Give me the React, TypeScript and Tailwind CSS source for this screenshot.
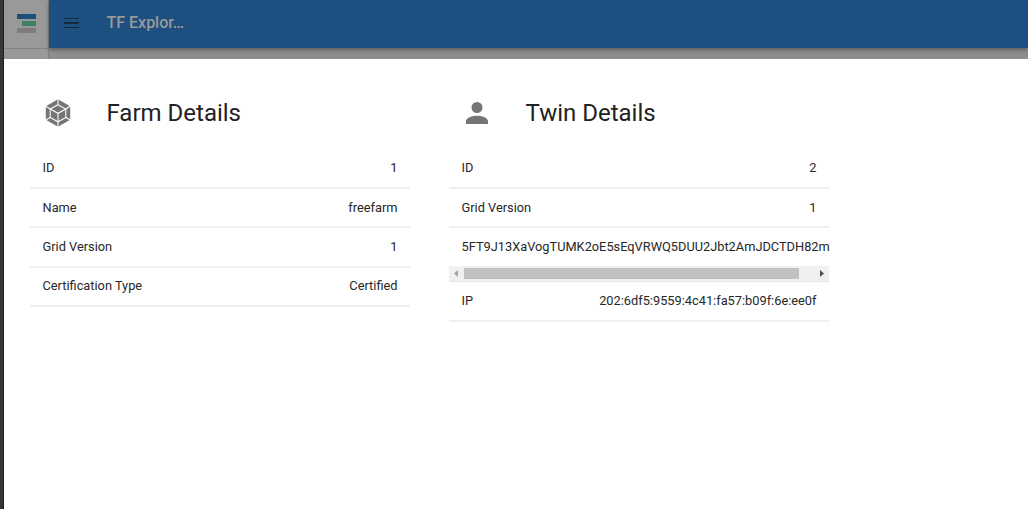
import React from "react";

type RowProps = { label: string; value: string; className?: string };

function Row({ label, value, className = "h-[39px]" }: RowProps) {
  return (
    <div
      className={`flex items-center justify-between border-b-2 border-[#efefef] px-[12.5px] text-[12.8px] leading-5 text-[#272727] ${className}`}
    >
      <span>{label}</span>
      <span>{value}</span>
    </div>
  );
}

function CubeIcon() {
  return (
    <svg width="26" height="28" viewBox="0 0 26 28" fill="#757575">
      <path d="M13 0.3 25.2 7.2V20.8L13 27.7 0.8 20.8V7.2Z" />
      <g fill="none" stroke="#fff" strokeWidth="1.05">
        <path d="M13 5.7 20.8 10V18.5L13 22.8 5.2 18.5V10Z" />
        <path d="M5.2 10 13 14.3 20.8 10M13 14.3V28M13 0V5.7M20.8 10 25.5 7M5.2 10 .5 7M5.2 18.5.5 21M20.8 18.5 25.5 21" />
      </g>
    </svg>
  );
}

function PersonIcon() {
  return (
    <svg width="22" height="22" viewBox="4 4 16 16" fill="#757575">
      <path d="M12 4a4 4 0 1 1 0 8 4 4 0 0 1 0-8zm0 10c4.42 0 8 1.79 8 4v2H4v-2c0-2.21 3.58-4 8-4z" />
    </svg>
  );
}

function Heading({ icon, title }: { icon: React.ReactNode; title: string }) {
  return (
    <div className="flex h-[53px] items-center">
      <div className="flex w-[56px] justify-center">{icon}</div>
      <h2 className="ml-[20.5px] text-[24px] leading-8 text-[#222]">{title}</h2>
    </div>
  );
}

function ScrollBar() {
  return (
    <div className="flex h-4 items-center border-b border-[#e6e6e6] bg-[#f0f0f0]">
      <div className="flex w-[15px] justify-center pr-px">
        <svg width="4" height="7" viewBox="0 0 4 7" fill="#a3a3a3">
          <path d="M4 0V7L0 3.5Z" />
        </svg>
      </div>
      <div className="h-[11px] w-[335px] bg-[#c1c1c1]" />
      <div className="ml-auto flex w-[15px] justify-center">
        <svg width="4" height="7" viewBox="0 0 4 7" fill="#505050">
          <path d="M0 0V7L4 3.5Z" />
        </svg>
      </div>
    </div>
  );
}

export default function App() {
  return (
    <div className="flex h-[509px] w-[1028px] overflow-hidden bg-white font-['Roboto',sans-serif]">
      <div className="w-1 shrink-0 border-r border-[#1f1f1f] bg-[#373635]" />
      <div className="flex min-w-0 flex-1 flex-col">
        <header className="flex h-[59px] shrink-0 bg-[#8e8e8e]">
          <div className="w-[45px] shrink-0 border-r border-[#828282] bg-[#999]">
            <div className="flex h-[49px] flex-col items-end gap-[2px] border-b border-[#828282] pt-[14px] pr-[12px]">
              <div className="h-[5px] w-[19px] bg-[#1d5079]" />
              <div className="h-[5px] w-[14px] bg-[#3d8062]" />
              <div className="h-[5px] w-[19px] bg-[#7d7d7d]" />
            </div>
          </div>
          <div className="flex h-12 flex-1 items-center bg-[#1d4f81] shadow-[0_2px_4px_rgba(0,0,0,0.35)]">
            <div className="ml-[15px] flex w-[15px] flex-col gap-[3px] pb-[2px]">
              <div className="h-[1.5px] bg-[#172b40]" />
              <div className="h-[1.5px] bg-[#172b40]" />
              <div className="h-[1.5px] bg-[#172b40]" />
            </div>
            <h1 className="ml-[27.5px] pb-[3px] text-[16px] font-medium leading-6 text-[#999]">
              TF Explor…
            </h1>
          </div>
        </header>
        <main className="flex flex-1 gap-[39px] bg-white pt-[27px] pl-[26px]">
          <section className="w-[380px]">
            <Heading icon={<CubeIcon />} title="Farm Details" />
            <div className="pt-[10px]">
              <Row label="ID" value="1" className="h-10 pb-px" />
              <Row label="Name" value="freefarm" />
              <Row label="Grid Version" value="1" className="h-10" />
              <Row
                label="Certification Type"
                value="Certified"
                className="h-[39px] pb-[2px]"
              />
            </div>
          </section>
          <section className="w-[380px]">
            <Heading icon={<PersonIcon />} title="Twin Details" />
            <div className="pt-[10px]">
              <Row label="ID" value="2" className="h-10 pb-px" />
              <Row label="Grid Version" value="1" />
              <div className="flex h-[38px] items-center pb-px pl-[12.5px] text-[12.8px] leading-5 whitespace-nowrap text-[#272727]">
                5FT9J13XaVogTUMK2oE5sEqVRWQ5DUU2Jbt2AmJDCTDH82m
              </div>
              <ScrollBar />
              <Row
                label="IP"
                value="202:6df5:9559:4c41:fa57:b09f:6e:ee0f"
                className="h-10 pb-px"
              />
            </div>
          </section>
        </main>
      </div>
    </div>
  );
}
